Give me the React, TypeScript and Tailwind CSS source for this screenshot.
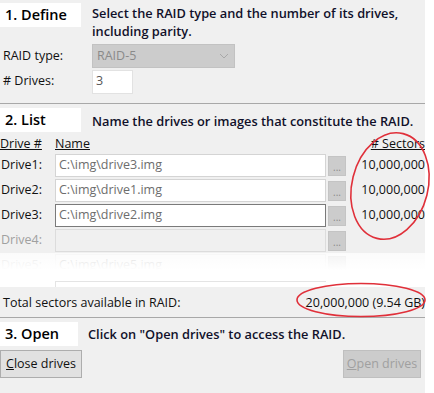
import React from "react";

const font = { fontFamily: '"Open Sans", "Noto Sans", sans-serif' };

function Header({ title, w }: { title: string; w: string }) {
  return (
    <div className={`${w} h-[24px] bg-white flex items-center pl-[5px] text-[14.5px] font-semibold text-black shrink-0`}>
      {title}
    </div>
  );
}

function DriveRow({ label, value, sectors, variant }: { label: string; value: string; sectors?: string; variant: "normal" | "focus" | "disabled" | "ghost" }) {
  const border =
    variant === "focus" ? "border-[#7a7a7a] bg-white" : variant === "normal" ? "border-[#d4d4d4] bg-white" : "border-[#dcdcdc] bg-[#f0f0f0]";
  return (
    <div className="flex items-center h-[25px]">
      <div className={`w-[55px] pl-[1px] ${variant === "disabled" || variant === "ghost" ? "text-[#a0a0a0]" : "text-[#111]"}`}>{label}</div>
      <div className={`w-[271px] h-[23px] border ${border} flex items-center pl-[3px] text-[#6d6d6d]`}>{value}</div>
      <div className="ml-[2px] w-[18px] h-[20px] bg-[#cccccc] border border-[#c4c4c4] flex items-end justify-center pb-[3px] text-[10px] leading-none text-[#8a8a8a]">...</div>
      <div className="flex-1 text-right text-[#111]">{sectors}</div>
    </div>
  );
}

export default function App() {
  return (
    <div className="w-[434px] h-[393px] bg-white flex text-[12.5px] overflow-hidden" style={font}>
      <div className="w-[425px] h-full bg-[#f0f0f0] relative">
        {/* Section 1 */}
        <div className="h-[104px] border-b border-[#a8a8a8] flex flex-col">
          <div className="flex pt-[3px]">
            <Header title="1. Define" w="w-[81px]" />
            <div className="ml-[11px] mt-[1px] text-[12.8px] leading-[18px] font-semibold text-[#10102a]">
              Select the RAID type and the number of its drives,
              <br />
              including parity.
            </div>
          </div>
          <div className="flex items-center mt-[4px] h-[24px]">
            <div className="w-[92px] pl-[3px] text-[#111]">RAID type:</div>
            <div className="w-[143px] h-[24px] bg-[#cccccc] border border-[#c2c2c2] flex items-center pl-[4px] text-[#8a8a8a]">
              <span className="flex-1">RAID-5</span>
              <svg width="10" height="6" viewBox="0 0 10 6" className="mr-[5px]">
                <path d="M1 1 L5 5 L9 1" stroke="#a8a8a8" strokeWidth="1" fill="none" />
              </svg>
            </div>
          </div>
          <div className="flex items-center h-[25px] mt-[1px]">
            <div className="w-[92px] pl-[3px] text-[#111]"># Drives:</div>
            <div className="w-[41px] h-[24px] bg-white border border-[#e2e2e2] flex items-center pl-[3px] text-[#555]">3</div>
          </div>
        </div>

        {/* Section 2 */}
        <div className="h-[214px] border-b border-[#a8a8a8] flex flex-col">
          <div className="flex items-center mt-[4px]">
            <Header title="2. List" w="w-[81px]" />
            <div className="ml-[11px] mt-[3px] text-[12.8px] font-semibold text-[#10102a]">Name the drives or images that constitute the RAID.</div>
          </div>
          <div className="flex h-[18px] mt-[3px] items-center text-[#111]">
            <div className="w-[55px] underline">Drive #</div>
            <div className="flex-1 underline">Name</div>
            <div className="underline">#&nbsp;Sectors</div>
          </div>
          <div className="relative h-[134px] overflow-hidden">
            <DriveRow label="Drive1:" value="C:\img\drive3.img" sectors="10,000,000" variant="normal" />
            <DriveRow label="Drive2:" value="C:\img\drive1.img" sectors="10,000,000" variant="normal" />
            <DriveRow label="Drive3:" value="C:\img\drive2.img" sectors="10,000,000" variant="focus" />
            <DriveRow label="Drive4:" value="" variant="disabled" />
            <DriveRow label="Drive5:" value="C:\img\drive5.img" variant="ghost" />
            <div className="absolute left-0 right-0 top-[100px] h-[34px] bg-gradient-to-b from-white/75 via-white to-white" />
            <div className="absolute left-[55px] w-[271px] top-[128px] h-[6px] border-l border-t border-[#e4e4e4]" />
          </div>
          <div className="flex items-center h-[20px] mt-[6px] text-[#111]">
            <div className="flex-1 pl-[3px]">Total sectors available in RAID:</div>
            <div>20,000,000 (9.54 GB)</div>
          </div>
        </div>

        {/* Section 3 */}
        <div className="flex items-center mt-[4px]">
          <Header title="3. Open" w="w-[78px]" />
          <div className="ml-[10px] mt-[2px] text-[12.8px] font-semibold text-[#10102a]">Click on "Open drives" to access the RAID.</div>
        </div>
        <div className="flex mt-[4px] justify-between pr-[4px]">
          <button className="w-[82px] h-[28px] bg-[#e1e1e1] border border-[#adadad] text-[#111] text-[12.5px] flex items-center justify-center" style={font}>
            <span><span className="underline">C</span>lose drives</span>
          </button>
          <button className="w-[78px] h-[28px] bg-[#cccccc] border border-[#bfbfbf] text-[#a0a0a0] text-[12.5px] flex items-center justify-center" style={font}>
            <span><span className="underline">O</span>pen drives</span>
          </button>
        </div>

        {/* Red annotations */}
        <svg className="absolute left-0 top-0 pointer-events-none" width="434" height="393" viewBox="0 0 434 393">
          <ellipse cx="390" cy="186" rx="38" ry="54" transform="rotate(14 390 186)" fill="none" stroke="#e0303a" strokeWidth="1.6" />
          <ellipse cx="361" cy="300" rx="64" ry="16.5" fill="none" stroke="#e0303a" strokeWidth="1.6" />
        </svg>
      </div>
    </div>
  );
}
